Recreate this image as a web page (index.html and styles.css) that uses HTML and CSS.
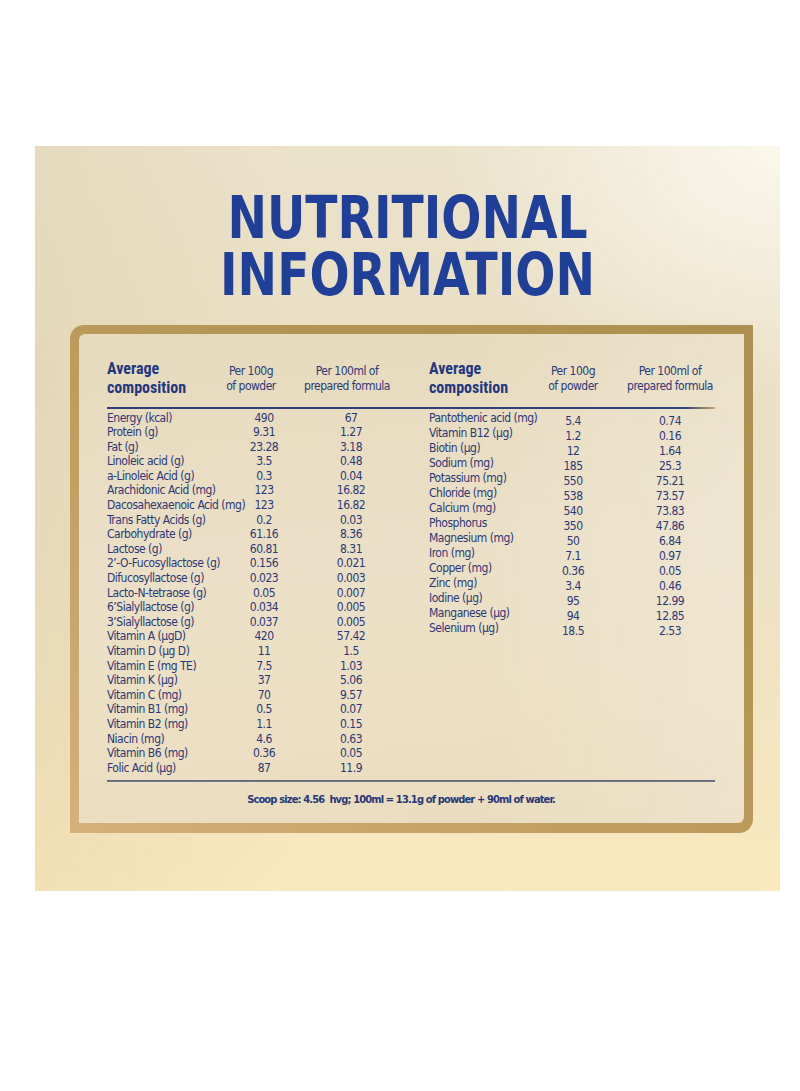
FILE: index.html
```html
<!DOCTYPE html>
<html lang="en">
<head>
<meta charset="utf-8">
<title>Nutritional Information</title>
<link rel="stylesheet" href="styles.css">
</head>
<body>
<div class="page">
  <section class="panel">
    <h1 class="title"><span class="title-line">NUTRITIONAL</span><span class="title-line">INFORMATION</span></h1>
    <div class="frame">
      <div class="inner">
        <div class="thead">
          <div class="head head-left">
            <div class="avg">Average<br>composition</div>
            <div class="sub">Per 100g<br>of powder</div>
            <div class="sub">Per 100ml of<br>prepared formula</div>
          </div>
          <div class="head head-right">
            <div class="avg">Average<br>composition</div>
            <div class="sub">Per 100g<br>of powder</div>
            <div class="sub sub-last">Per 100ml of<br>prepared formula</div>
          </div>
        </div>
        <div class="rule rule-top"></div>
        <div class="tbody">
          <div class="data data-left">
            <span>Energy (kcal)</span><span>490</span><span>67</span>
            <span>Protein (g)</span><span>9.31</span><span>1.27</span>
            <span>Fat (g)</span><span>23.28</span><span>3.18</span>
            <span>Linoleic acid (g)</span><span>3.5</span><span>0.48</span>
            <span>a-Linoleic Acid (g)</span><span>0.3</span><span>0.04</span>
            <span>Arachidonic Acid (mg)</span><span>123</span><span>16.82</span>
            <span>Dacosahexaenoic Acid (mg)</span><span>123</span><span>16.82</span>
            <span>Trans Fatty Acids (g)</span><span>0.2</span><span>0.03</span>
            <span>Carbohydrate (g)</span><span>61.16</span><span>8.36</span>
            <span>Lactose (g)</span><span>60.81</span><span>8.31</span>
            <span>2’-O-Fucosyllactose (g)</span><span>0.156</span><span>0.021</span>
            <span>Difucosyllactose (g)</span><span>0.023</span><span>0.003</span>
            <span>Lacto-N-tetraose (g)</span><span>0.05</span><span>0.007</span>
            <span>6’Sialyllactose (g)</span><span>0.034</span><span>0.005</span>
            <span>3’Sialyllactose (g)</span><span>0.037</span><span>0.005</span>
            <span>Vitamin A (µgD)</span><span>420</span><span>57.42</span>
            <span>Vitamin D (µg D)</span><span>11</span><span>1.5</span>
            <span>Vitamin E (mg TE)</span><span>7.5</span><span>1.03</span>
            <span>Vitamin K (µg)</span><span>37</span><span>5.06</span>
            <span>Vitamin C (mg)</span><span>70</span><span>9.57</span>
            <span>Vitamin B1 (mg)</span><span>0.5</span><span>0.07</span>
            <span>Vitamin B2 (mg)</span><span>1.1</span><span>0.15</span>
            <span>Niacin (mg)</span><span>4.6</span><span>0.63</span>
            <span>Vitamin B6 (mg)</span><span>0.36</span><span>0.05</span>
            <span>Folic Acid (µg)</span><span>87</span><span>11.9</span>
          </div>
          <div class="data data-right">
            <span>Pantothenic acid (mg)</span><span>5.4</span><span>0.74</span>
            <span>Vitamin B12 (µg)</span><span>1.2</span><span>0.16</span>
            <span>Biotin (µg)</span><span>12</span><span>1.64</span>
            <span>Sodium (mg)</span><span>185</span><span>25.3</span>
            <span>Potassium (mg)</span><span>550</span><span>75.21</span>
            <span>Chloride (mg)</span><span>538</span><span>73.57</span>
            <span>Calcium (mg)</span><span>540</span><span>73.83</span>
            <span>Phosphorus</span><span>350</span><span>47.86</span>
            <span>Magnesium (mg)</span><span>50</span><span>6.84</span>
            <span>Iron (mg)</span><span>7.1</span><span>0.97</span>
            <span>Copper (mg)</span><span>0.36</span><span>0.05</span>
            <span>Zinc (mg)</span><span>3.4</span><span>0.46</span>
            <span>Iodine (µg)</span><span>95</span><span>12.99</span>
            <span>Manganese (µg)</span><span>94</span><span>12.85</span>
            <span>Selenium (µg)</span><span>18.5</span><span>2.53</span>
          </div>
        </div>
        <div class="rule rule-bottom"></div>
        <p class="scoop">Scoop size: 4.56&nbsp; hvg; 100ml = 13.1g of powder + 90ml of water.</p>
      </div>
    </div>
  </section>
</div>
</body>
</html>
```
FILE: styles.css
```css
html, body {
  margin: 0;
  padding: 0;
  background: #ffffff;
}

.page {
  padding: 146px 0 0 35px;
}

.panel {
  width: 745px;
  height: 745px;
  box-sizing: border-box;
  padding-top: 43px;
  background:
    radial-gradient(ellipse 45% 35% at 100% 0%, rgba(251, 248, 238, 0.95), rgba(251, 248, 238, 0) 100%),
    linear-gradient(90deg, rgba(200, 178, 128, 0.16), rgba(200, 178, 128, 0) 35%),
    linear-gradient(180deg, #ebe2ca 0%, #eadfc4 30%, #ece1c5 55%, #f4e5bf 82%, #f9e9bd 100%);
}

.title {
  margin: 0;
  font-family: "DejaVu Sans Condensed", "DejaVu Sans", sans-serif;
  font-stretch: condensed;
  font-weight: 700;
  font-size: 59px;
  line-height: 57px;
  color: #1f3f98;
  text-align: center;
  transform: scaleX(0.89);
}

.title-line {
  display: block;
  height: 57px;
}

.frame {
  margin: 22px 0 0 35px;
  width: 683px;
  height: 508px;
  box-sizing: border-box;
  padding: 9px 9px 10px 9px;
  border-radius: 14px 0 14px 0;
  background: linear-gradient(to top right, #d4b17b 0%, #c2a062 35%, #b39452 65%, #ad8f4f 100%);
}

.inner {
  height: 100%;
  box-sizing: border-box;
  padding: 25px 29px 0 28px;
  border-radius: 6px 0 6px 0;
  background:
    linear-gradient(90deg, rgba(255, 255, 255, 0) 60%, rgba(255, 255, 255, 0.18) 100%),
    linear-gradient(175deg, #e6dabd 0%, #ebe0c7 45%, #ecdfc3 75%, #e9dcbe 100%);
  color: #2b3877;
  font-family: "DejaVu Sans Condensed", "DejaVu Sans", sans-serif;
  font-stretch: condensed;
}

.thead {
  display: flex;
}

.head {
  display: grid;
  align-items: end;
  flex: none;
}

.head-left {
  width: 322px;
  grid-template-columns: 98px 92px 100px;
}

.head-right {
  width: 286px;
  grid-template-columns: 98px 92px 96px;
}

.avg {
  font-family: Roboto, "Liberation Sans", sans-serif;
  font-weight: 700;
  font-size: 16px;
  line-height: 19px;
  color: #22377f;
  white-space: nowrap;
}

.sub {
  font-size: 12px;
  line-height: 15px;
  letter-spacing: -0.5px;
  text-align: center;
  white-space: nowrap;
  padding-bottom: 3px;
}

.sub-last {
  padding-left: 6px;
}

.rule {
  height: 2px;
}

.rule-top {
  margin-top: 10px;
  background: linear-gradient(90deg, #2f3d7c 0%, #33417c 95%, #c6a46a 100%);
}

.tbody {
  display: flex;
  align-items: flex-start;
  margin-top: 1.5px;
}

.data {
  display: grid;
  align-content: start;
  flex: none;
  font-size: 12px;
  line-height: 14.6px;
  letter-spacing: -0.5px;
  white-space: nowrap;
}

.data span:nth-child(3n+2),
.data span:nth-child(3n) {
  text-align: center;
}

.data-left {
  width: 322px;
  grid-template-columns: 129px 56px 118px;
}

.data-right {
  width: 286px;
  line-height: 15px;
  grid-template-columns: 110px 68px 108px;
}

.data-right span:nth-child(3n+2),
.data-right span:nth-child(3n) {
  margin-top: 3px;
  margin-bottom: -3px;
}

.data-right span:nth-child(3n) {
  padding-left: 18px;
}

.rule-bottom {
  margin-top: 4.5px;
  background: linear-gradient(180deg, #5e6277, #7a7c88);
}

.scoop {
  margin: 10px 0 0 0;
  padding-right: 20px;
  font-weight: 700;
  font-size: 11px;
  line-height: 16px;
  letter-spacing: -0.85px;
  text-align: center;
  color: #263879;
  white-space: nowrap;
}
```
